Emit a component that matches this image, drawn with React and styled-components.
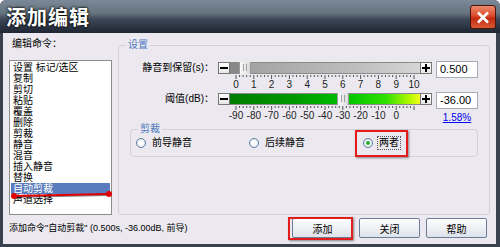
import React from "react";
import styled, { createGlobalStyle } from "styled-components";

const GlobalStyle = createGlobalStyle`
  html, body {
    margin: 0;
    padding: 0;
    background: #fff;
    overflow: hidden;
  }
  body {
    font-family: "Liberation Sans", "Noto Sans CJK SC", sans-serif;
  }
  * {
    box-sizing: border-box;
  }
`;

const Window = styled.div`
  width: 500px;
  height: 247px;
  display: flex;
  flex-direction: column;
  background: #3a4250;
  border-radius: 6px 6px 0 0;
  overflow: hidden;
`;

const TitleBar = styled.div`
  height: 33px;
  flex-shrink: 0;
  display: flex;
  align-items: center;
  justify-content: space-between;
  padding: 0 4px 0 6px;
  background: linear-gradient(#7a8898 0%, #66747f 40%, #3e4858 58%, #1e2533 100%);
`;

const Title = styled.div`
  color: #fff;
  font-family: "Noto Sans CJK SC", sans-serif;
  font-size: 20px;
  font-weight: bold;
  letter-spacing: 1px;
  line-height: 24px;
  text-shadow: 0 0 3px #000, 0 0 2px #000;
`;

const CloseBtn = styled.div`
  width: 26px;
  height: 24px;
  margin-top: 1px;
  display: flex;
  align-items: center;
  justify-content: center;
  border: 1px solid #4a1408;
  border-radius: 3px;
  background: linear-gradient(#ec8a6c 0%, #dc4a2c 45%, #c22a10 55%, #d85a34 100%);
`;

const Body = styled.div`
  flex: 1;
  margin: 0 4px 3px 3px;
  background: #ebe9ef;
  display: flex;
  flex-direction: column;
  font-size: 10px;
  color: #000;
`;

const Main = styled.div`
  height: 182px;
  display: flex;
  gap: 6px;
  padding: 0 6px;
`;

const LeftCol = styled.div`
  width: 103px;
  display: flex;
  flex-direction: column;
`;

const CmdLabel = styled.div`
  height: 27px;
  padding: 5px 0 0 3px;
  line-height: 12px;
`;

const List = styled.div`
  position: relative;
  height: 155px;
  border: 1px solid #8d8d8d;
  background: #fff;
  padding-top: 1px;
`;

const Item = styled.div`
  height: 11px;
  line-height: 11px;
  padding-left: 2px;
  margin: 0 1px;
  white-space: nowrap;
  background: ${p => (p.$selected ? "#5a7cbf" : "transparent")};
  color: ${p => (p.$selected ? "#fff" : "#000")};
`;

const Mark = styled.svg`
  position: absolute;
  left: 0;
  top: 0;
  pointer-events: none;
`;

const Group = styled.div`
  position: relative;
  flex: 1;
  margin-top: 12px;
  height: 170px;
  border: 1px solid #d3d0d6;
  border-radius: 3px;
  padding-top: 16px;
`;

const Legend = styled.span`
  position: absolute;
  top: -7px;
  left: 7px;
  padding: 0 2px;
  line-height: 12px;
  background: #ebe9ef;
  color: #4f7ac0;
`;

const SliderRow = styled.div`
  display: flex;
  align-items: flex-start;
`;

const SliderLabel = styled.div`
  width: 95px;
  margin-right: 4px;
  height: 12px;
  line-height: 12px;
  text-align: right;
  white-space: nowrap;
`;

const SliderBox = styled.div`
  width: 214px;
  display: flex;
  flex-direction: column;
`;

const TrackRow = styled.div`
  display: flex;
  height: 12px;
`;

const StepBtn = styled.div`
  width: 12px;
  height: 12px;
  display: flex;
  align-items: center;
  justify-content: center;
  background: linear-gradient(#ffffff, #e6e6e6);
  border: 1px solid #777;
`;

const Track = styled.div`
  position: relative;
  width: 190px;
  height: 12px;
  border-top: 1px solid #8a8a8a;
  border-bottom: 1px solid #8a8a8a;
  background: ${p =>
    p.$kind === "green"
      ? "linear-gradient(to right, #007c00 0%, #009a00 35%, #00c400 62%, #30e000 82%, #b8f800 95%, #f4ff20 100%)"
      : "linear-gradient(to right, #9c9c9c 0%, #a8a8a8 20%, #c0c0c0 70%, #d6d6d6 100%)"};
`;

const Filled = styled.div`
  position: absolute;
  left: 0;
  top: 0;
  bottom: 0;
  background: #888;
`;

const Thumb = styled.div`
  position: absolute;
  top: -1px;
  width: 12px;
  height: 12px;
  background: linear-gradient(to right, #fafafa, #dadada);
  border-left: 1px solid #9a9a9a;
  border-right: 1px solid #9a9a9a;
  display: flex;
  justify-content: center;
  gap: 2px;
  padding-top: 2px;

  &::before,
  &::after {
    content: "";
    width: 1px;
    height: 7px;
    background: #a0a0a0;
  }
`;

const ValueCol = styled.div`
  width: 42px;
  margin-left: 4px;
  display: flex;
  flex-direction: column;
`;

const ValueBox = styled.div`
  height: 17px;
  margin-top: -1px;
  border: 1px solid #a5acb5;
  background: #fff;
  padding-left: 3px;
  font-size: 11px;
  line-height: 15px;
`;

const Percent = styled.a`
  margin-top: 3px;
  line-height: 12px;
  text-align: center;
  color: #0000ee;
  text-decoration: underline;
  font-size: 10px;
`;

const TrimGroup = styled.div`
  position: relative;
  margin: 5px 11px 0 11px;
  height: 28px;
  border: 1px solid #d3d0d6;
  border-radius: 4px;
  padding-left: 5px;
  display: grid;
  grid-template-columns: 113px 114px auto;
  align-items: center;
`;

const RadioItem = styled.div`
  position: relative;
  display: flex;
  align-items: center;
  gap: 4px;
  height: 14px;
`;

const RadioDot = styled.span`
  width: 10px;
  height: 10px;
  border-radius: 50%;
  border: 1px solid #5a7aa2;
  background: radial-gradient(circle at 50% 50%, #ffffff 30%, #d6dde6 100%);
  display: flex;
  align-items: center;
  justify-content: center;

  &::after {
    content: "";
    width: 4px;
    height: 4px;
    border-radius: 50%;
    background: ${p => (p.$checked ? "#22b022" : "transparent")};
  }
`;

const RadioText = styled.span`
  line-height: 12px;
  padding: 0 1px;
  border: 1px dotted ${p => (p.$focus ? "#555" : "transparent")};
`;

const Highlight = styled.div`
  position: absolute;
  border: 2px solid #e41b1b;
  box-shadow: 1px 1px 2px rgba(0, 0, 0, 0.45);
  pointer-events: none;
`;

const Footer = styled.div`
  flex: 1;
  display: flex;
  justify-content: space-between;
  align-items: flex-start;
  padding: 3px 9px 0 6px;
`;

const Status = styled.div`
  line-height: 20px;
  font-size: 9px;
  white-space: nowrap;
`;

const Buttons = styled.div`
  display: flex;
  gap: 6px;
`;

const BtnWrap = styled.div`
  position: relative;
`;

const Button = styled.div`
  width: 61px;
  height: 20px;
  display: flex;
  align-items: center;
  justify-content: center;
  border: 1px solid #6d7d98;
  border-radius: 2px;
  background: linear-gradient(#fefefe 0%, #eef0f4 50%, #dde2ea 100%);
  font-size: 10px;
`;

const commands = [
  "设置 标记/选区",
  "复制",
  "剪切",
  "粘贴",
  "覆盖",
  "删除",
  "剪裁",
  "静音",
  "混音",
  "插入静音",
  "替换",
  "自动剪裁",
  "声道选择",
];

const Scale = ({ labels }) => {
  const ticks = [];
  for (let i = 0; i <= 50; i++) {
    const x = 18 + i * 3.56;
    const major = i % 5 === 0;
    ticks.push(
      <line key={i} x1={x} x2={x} y1={1} y2={major ? 5 : 3} stroke="#555" strokeWidth="1" />
    );
  }
  return (
    <svg width="214" height="19">
      {ticks}
      {labels.map((l, i) => (
        <text
          key={l}
          x={18 + i * 17.8}
          y={14}
          fontSize="10"
          textAnchor="middle"
          fontFamily="Liberation Sans, sans-serif"
          fill="#222"
        >
          {l}
        </text>
      ))}
    </svg>
  );
};

const Slider = ({ frac, kind, labels }) => {
  const left = Math.round(frac * 178);
  return (
    <SliderBox>
      <TrackRow>
        <StepBtn>
          <svg width="8" height="8">
            <rect x="0" y="3" width="8" height="2" fill="#000" />
          </svg>
        </StepBtn>
        <Track $kind={kind}>
          {kind !== "green" && <Filled style={{ width: left }} />}
          <Thumb style={{ left }} />
        </Track>
        <StepBtn>
          <svg width="8" height="8">
            <rect x="0" y="3" width="8" height="2" fill="#000" />
            <rect x="3" y="0" width="2" height="8" fill="#000" />
          </svg>
        </StepBtn>
      </TrackRow>
      <Scale labels={labels} />
    </SliderBox>
  );
};

export default function App() {
  return (
    <>
      <GlobalStyle />
      <Window>
        <TitleBar>
          <Title>添加编辑</Title>
          <CloseBtn>
            <svg width="14" height="13" viewBox="0 0 14 13">
              <path d="M2 1.5 L12 11.5 M12 1.5 L2 11.5" stroke="#fff" strokeWidth="2.6" />
            </svg>
          </CloseBtn>
        </TitleBar>
        <Body>
          <Main>
            <LeftCol>
              <CmdLabel>编辑命令：</CmdLabel>
              <List>
                {commands.map(c => (
                  <Item key={c} $selected={c === "自动剪裁"}>
                    {c}
                  </Item>
                ))}
                <Mark width="103" height="155">
                  <line x1="4" y1="136" x2="99" y2="134" stroke="rgba(0,0,0,0.45)" strokeWidth="2" />
                  <line x1="4" y1="135" x2="99" y2="133" stroke="#e00000" strokeWidth="2" />
                  <circle cx="4" cy="135" r="3" fill="#e00000" />
                  <circle cx="99" cy="133" r="3" fill="#e00000" />
                </Mark>
              </List>
            </LeftCol>
            <Group>
              <Legend>设置</Legend>
              <SliderRow>
                <SliderLabel>静音到保留(s)：</SliderLabel>
                <Slider
                  frac={0.05}
                  kind="gray"
                  labels={["0", "1", "2", "3", "4", "5", "6", "7", "8", "9", "10"]}
                />
                <ValueCol>
                  <ValueBox>0.500</ValueBox>
                </ValueCol>
              </SliderRow>
              <SliderRow>
                <SliderLabel>阈值(dB)：</SliderLabel>
                <Slider
                  frac={0.6}
                  kind="green"
                  labels={["-90", "-80", "-70", "-60", "-50", "-40", "-30", "-20", "-10", "0"]}
                />
                <ValueCol>
                  <ValueBox>-36.00</ValueBox>
                  <Percent>1.58%</Percent>
                </ValueCol>
              </SliderRow>
              <TrimGroup>
                <Legend>剪裁</Legend>
                <RadioItem>
                  <RadioDot />
                  <RadioText>前导静音</RadioText>
                </RadioItem>
                <RadioItem>
                  <RadioDot />
                  <RadioText>后续静音</RadioText>
                </RadioItem>
                <RadioItem>
                  <RadioDot $checked />
                  <RadioText $focus>两者</RadioText>
                  <Highlight style={{ left: -8, top: -6, width: 53, height: 27 }} />
                </RadioItem>
              </TrimGroup>
            </Group>
          </Main>
          <Footer>
            <Status>添加命令"自动剪裁" (0.500s, -36.00dB, 前导)</Status>
            <Buttons>
              <BtnWrap>
                <Button>添加</Button>
                <Highlight style={{ left: -4, top: -1, width: 65, height: 23 }} />
              </BtnWrap>
              <Button>关闭</Button>
              <Button>帮助</Button>
            </Buttons>
          </Footer>
        </Body>
      </Window>
    </>
  );
}
